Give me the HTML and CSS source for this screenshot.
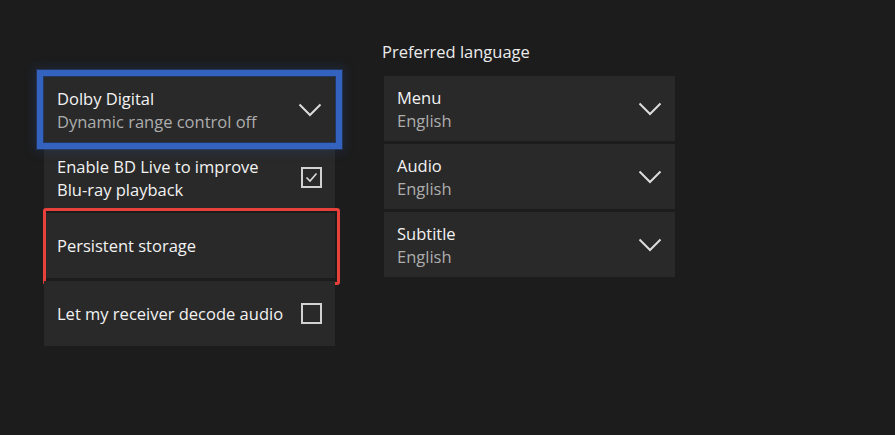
FILE: index.html
```html
<!DOCTYPE html>
<html lang="en">
<head>
<meta charset="utf-8">
<title>Blu-ray settings</title>
<link rel="stylesheet" href="styles.css">
</head>
<body>
<div class="page">
  <div class="col col-left">
    <div class="tile focused">
      <div class="text">
        <div class="title">Dolby Digital</div>
        <div class="sub">Dynamic range control off</div>
      </div>
      <svg class="chev" width="24" height="14" viewBox="0 0 24 14"><path d="M1.5 1.5 L12 12 L22.5 1.5" fill="none" stroke="#dcdcdc" stroke-width="2"/></svg>
    </div>
    <div class="tile">
      <div class="text">
        <div class="title">Enable BD Live to improve</div>
        <div class="title">Blu-ray playback</div>
      </div>
      <span class="box"><svg width="17" height="17" viewBox="0 0 17 17"><path d="M3.5 8.5 L7 12 L13.5 4.5" fill="none" stroke="#dcdcdc" stroke-width="1.6"/></svg></span>
    </div>
    <div class="tile marked">
      <div class="text">
        <div class="title">Persistent storage</div>
      </div>
    </div>
    <div class="tile">
      <div class="text">
        <div class="title">Let my receiver decode audio</div>
      </div>
      <span class="box"></span>
    </div>
  </div>
  <div class="col col-right">
    <div class="heading">Preferred language</div>
    <div class="list">
      <div class="tile">
        <div class="text">
          <div class="title">Menu</div>
          <div class="sub">English</div>
        </div>
        <svg class="chev" width="24" height="14" viewBox="0 0 24 14"><path d="M1.5 1.5 L12 12 L22.5 1.5" fill="none" stroke="#dcdcdc" stroke-width="2"/></svg>
      </div>
      <div class="tile">
        <div class="text">
          <div class="title">Audio</div>
          <div class="sub">English</div>
        </div>
        <svg class="chev" width="24" height="14" viewBox="0 0 24 14"><path d="M1.5 1.5 L12 12 L22.5 1.5" fill="none" stroke="#dcdcdc" stroke-width="2"/></svg>
      </div>
      <div class="tile">
        <div class="text">
          <div class="title">Subtitle</div>
          <div class="sub">English</div>
        </div>
        <svg class="chev" width="24" height="14" viewBox="0 0 24 14"><path d="M1.5 1.5 L12 12 L22.5 1.5" fill="none" stroke="#dcdcdc" stroke-width="2"/></svg>
      </div>
    </div>
  </div>
</div>
</body>
</html>
```

FILE: styles.css
```css
html, body {
  margin: 0;
  padding: 0;
  background: #1c1c1c;
  height: 100%;
}
body {
  font-family: "Open Sans", "Noto Sans", sans-serif;
  color: #f0f0f0;
  font-size: 16.5px;
}
.page {
  display: flex;
  gap: 49px;
  padding: 42px 0 0 44px;
}
.col {
  width: 291px;
  display: flex;
  flex-direction: column;
}
.col-left {
  padding-top: 35px;
  gap: 3px;
}
.list {
  display: flex;
  flex-direction: column;
  gap: 3px;
}
.heading {
  margin-left: -2px;
  line-height: 20px;
  height: 20px;
  margin-bottom: 14px;
  color: #ececec;
}
.tile {
  position: relative;
  height: 65px;
  box-sizing: border-box;
  background: #292929;
  display: flex;
  align-items: center;
  justify-content: space-between;
  padding: 0 13px;
}
.text {
  display: flex;
  flex-direction: column;
}
.title {
  line-height: 23px;
  color: #f2f2f2;
}
.sub {
  line-height: 23px;
  color: #adadad;
}
.chev {
  display: block;
  margin-top: 1px;
}
.focused {
  outline: 6px solid #3462bf;
  outline-offset: 1px;
  box-shadow: 0 0 0 8px rgba(50, 96, 190, 0.3), 0 0 10px 10px rgba(40, 80, 170, 0.2);
  z-index: 1;
}
.box {
  width: 21px;
  height: 21px;
  box-sizing: border-box;
  border: 2px solid #d2d2d2;
  display: flex;
  align-items: center;
  justify-content: center;
}
.box svg {
  display: block;
}
.marked::after {
  content: "";
  position: absolute;
  left: -1px;
  right: -5px;
  top: -5px;
  bottom: -7px;
  border: 3px solid #e8403b;
  border-radius: 3px;
}
```
